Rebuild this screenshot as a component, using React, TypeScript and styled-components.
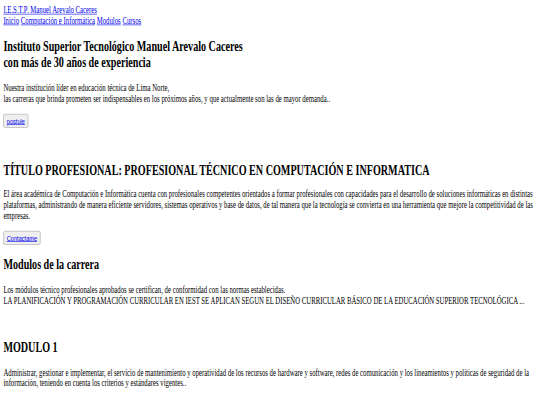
import React from 'react';
import styled, { createGlobalStyle } from 'styled-components';

const GlobalStyle = createGlobalStyle`
  html, body {
    margin: 0;
    overflow: hidden;
    background: #fff;
  }
`;

// the page was captured from a wider window, then squeezed into 540x405
const Page = styled.div`
  width: 1280px;
  padding: 8px;
  box-sizing: border-box;
  font-family: "Liberation Serif", "Times New Roman", serif;
  font-size: 16px;
  color: #000;
  transform: scale(0.4219, 0.6);
  transform-origin: 0 0;
`;

const Link = styled.a`
  color: #0000ee;
  text-decoration: underline;
  cursor: pointer;
`;

const Nav = styled.nav`
  display: block;
`;

const Heading = styled.h2`
  font-size: 24px;
  font-weight: bold;
  margin: 20px 0;
`;

const BigHeading = styled.h1`
  font-size: 24px;
  font-weight: bold;
  margin: 58px 0 17px;
`;

const Text = styled.p`
  margin: 16px 0;
`;

const Button = styled.button`
  font-family: "Liberation Sans", Arial, sans-serif;
  font-size: 13.33px;
  padding: 3px 7px;
  border: 1px solid #9a9a9a;
  border-radius: 3px;
  background: #efefef;
`;

const Section = styled.section<{ $gap?: number }>`
  margin-top: ${({ $gap }) => $gap ?? 0}px;
`;

export default function App() {
  return (
    <>
      <GlobalStyle />
      <Page>
        <header>
          <div>
            <Link>I.E.S.T.P. Manuel Arevalo Caceres</Link>
          </div>
          <Nav>
            <Link>Inicio</Link> <Link>Computación e Informática</Link> <Link>Modulos</Link>{' '}
            <Link>Cursos</Link>
          </Nav>
        </header>
        <Section>
          <Heading>
            Instituto Superior Tecnológico Manuel Arevalo Caceres
            <br />
            con más de 30 años de experiencia
          </Heading>
          <Text>
            Nuestra institución líder en educación técnica de Lima Norte,
            <br />
            las carreras que brinda prometen ser indispensables en los próximos años, y que actualmente son las de mayor demanda..
          </Text>
          <Button>
            <Link>postule</Link>
          </Button>
        </Section>
        <Section>
          <BigHeading>TÍTULO PROFESIONAL: PROFESIONAL TÉCNICO EN COMPUTACIÓN E INFORMATICA</BigHeading>
          <Text>
            El área académica de Computación e Informática cuenta con profesionales competentes orientados a formar
            profesionales con capacidades para el desarrollo de soluciones informáticas en distintas plataformas,
            administrando de manera eficiente servidores, sistemas operativos y base de datos, de tal manera que la
            tecnología se convierta en una herramienta que mejore la competitividad de las empresas.
          </Text>
          <Button>
            <Link>Contactame</Link>
          </Button>
        </Section>
        <Section>
          <Heading>Modulos de la carrera</Heading>
          <Text>
            Los módulos técnico profesionales aprobados se certifican, de conformidad con las normas establecidas.
            <br />
            LA PLANIFICACIÓN Y PROGRAMACIÓN CURRICULAR EN IEST SE APLICAN SEGUN EL DISEÑO CURRICULAR BÁSICO DE LA
            EDUCACIÓN SUPERIOR TECNOLÓGICA ...
          </Text>
        </Section>
        <Section $gap={54}>
          <Heading>MODULO 1</Heading>
          <Text>
            Administrar, gestionar e implementar, el servicio de mantenimiento y operatividad de los recursos de hardware
            y software, redes de comunicación y los lineamientos y políticas de seguridad de la información, teniendo en
            cuenta los criterios y estándares vigentes..
          </Text>
        </Section>
      </Page>
    </>
  );
}
